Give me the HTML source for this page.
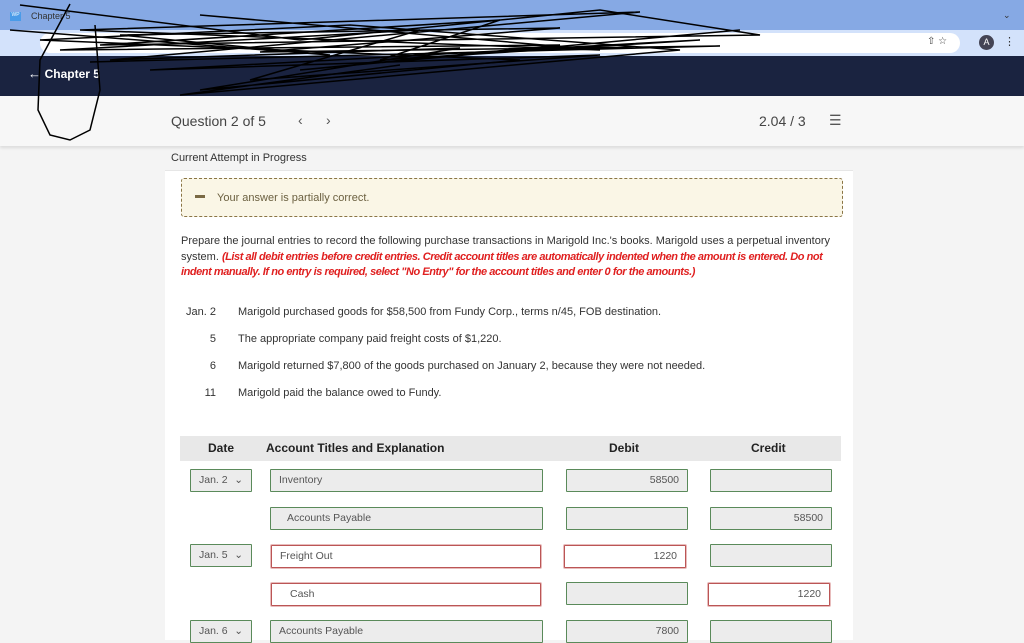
<!DOCTYPE html>
<html><head><meta charset="utf-8"><style>
*{box-sizing:border-box;margin:0;padding:0}
body{width:1024px;height:640px;overflow:hidden;background:#f4f4f4;font-family:"Liberation Sans",sans-serif;position:relative;color:#333}
.abs{position:absolute}
.inp{position:absolute;height:23px;border:1px solid #5a8a5a;background:#ececec;font-size:10.5px;color:#555;line-height:21px;padding:0 8px;border-radius:1px}
.red{border:1px solid #b55;background:#fff;box-shadow:0 0 0 1px #e8bcbc}
.r{text-align:right}
</style></head><body>
<div class="abs" style="left:0;top:0;width:1024px;height:30px;background:#86a9e4"></div>
<div class="abs" style="left:0;top:30px;width:1024px;height:26px;background:#d3e2fb"></div>
<div class="abs" style="left:40px;top:33px;width:920px;height:20px;background:#fff;border-radius:10px"></div>
<div class="abs" style="left:10px;top:12px;width:11px;height:9px;background:#4a9be8;font-size:5px;color:#fff;text-align:center">WP</div>
<div class="abs" style="left:31px;top:11px;font-size:9px;color:#333">Chapter 5</div>
<div class="abs" style="left:927px;top:36px;font-size:10px;color:#444">⇧ ☆</div>
<div class="abs" style="left:979px;top:35px;width:15px;height:15px;border-radius:50%;background:#445;color:#fff;font-size:9px;text-align:center;line-height:15px">A</div>
<div class="abs" style="left:1004px;top:35px;font-size:11px;color:#333">⋮</div>
<div class="abs" style="left:1003px;top:10px;font-size:9px;color:#333">⌄</div>
<div class="abs" style="left:0;top:56px;width:1024px;height:40px;background:#1a2340"></div>
<div class="abs" style="left:28px;top:66px;color:#fff;font-size:13px;font-weight:bold">← <span style="font-size:12px">Chapter 5</span></div>
<div class="abs" style="left:0;top:96px;width:1024px;height:50px;background:#f7f7f7;box-shadow:0 2px 3px rgba(0,0,0,.1)"></div>
<div class="abs" style="left:171px;top:113px;font-size:14px;color:#444">Question 2 of 5</div>
<div class="abs" style="left:298px;top:112px;font-size:14px;color:#555">‹&nbsp;&nbsp;&nbsp;&nbsp;&nbsp;&nbsp;›</div>
<div class="abs" style="left:759px;top:113px;font-size:14px;color:#444">2.04 / 3</div>
<div class="abs" style="left:829px;top:112px;font-size:14px;color:#555">☰</div>
<div class="abs" style="left:171px;top:152px;font-size:11px;color:#333">Current Attempt in Progress</div>
<div class="abs" style="left:165px;top:170px;width:688px;height:470px;background:#fff;border-top:1px solid #e6e6e6"></div>
<div class="abs" style="left:181px;top:178px;width:662px;height:39px;background:#faf6e6;border:1px dashed #8a7545;border-radius:3px"></div>
<div class="abs" style="left:195px;top:195px;width:10px;height:3px;background:#7a6a45"></div>
<div class="abs" style="left:217px;top:192px;font-size:11px;color:#6b6040">Your answer is partially correct.</div>
<div class="abs" style="left:181px;top:234px;width:665px;font-size:11px;line-height:15.5px;color:#333">Prepare the journal entries to record the following purchase transactions in Marigold Inc.'s books. Marigold uses a perpetual inventory system. <i style="color:#e02020;font-weight:bold;letter-spacing:-.45px">(List all debit entries before credit entries. Credit account titles are automatically indented when the amount is entered. Do not indent manually. If no entry is required, select "No Entry" for the account titles and enter 0 for the amounts.)</i></div>
<div class="abs r" style="left:180px;top:299px;width:36px;font-size:11px;line-height:27px;color:#333">Jan. 2<br>5<br>6<br>11</div>
<div class="abs" style="left:238px;top:299px;font-size:11px;line-height:27px;color:#333">Marigold purchased goods for $58,500 from Fundy Corp., terms n/45, FOB destination.<br>The appropriate company paid freight costs of $1,220.<br>Marigold returned $7,800 of the goods purchased on January 2, because they were not needed.<br>Marigold paid the balance owed to Fundy.</div>
<div class="abs" style="left:180px;top:436px;width:661px;height:25px;background:#e8e8e8;font-size:12px;font-weight:bold;color:#222;line-height:25px">
<span class="abs" style="left:28px">Date</span><span class="abs" style="left:86px">Account Titles and Explanation</span><span class="abs" style="left:429px">Debit</span><span class="abs" style="left:571px">Credit</span></div>
<div class="inp" style="left:190px;top:469px;width:62px">Jan. 2 <span style="float:right">⌄</span></div>
<div class="inp" style="left:270px;top:469px;width:273px">Inventory</div>
<div class="inp r" style="left:566px;top:469px;width:122px">58500</div>
<div class="inp" style="left:710px;top:469px;width:122px"></div>
<div class="inp" style="left:270px;top:507px;width:273px;padding-left:16px">Accounts Payable</div>
<div class="inp" style="left:566px;top:507px;width:122px"></div>
<div class="inp r" style="left:710px;top:507px;width:122px">58500</div>
<div class="inp" style="left:190px;top:544px;width:62px">Jan. 5 <span style="float:right">⌄</span></div>
<div class="inp red" style="left:271px;top:545px;width:270px">Freight Out</div>
<div class="inp red r" style="left:564px;top:545px;width:122px">1220</div>
<div class="inp" style="left:710px;top:544px;width:122px"></div>
<div class="inp red" style="left:271px;top:583px;width:270px;padding-left:18px">Cash</div>
<div class="inp" style="left:566px;top:582px;width:122px"></div>
<div class="inp red r" style="left:708px;top:583px;width:122px">1220</div>
<div class="inp" style="left:190px;top:620px;width:62px">Jan. 6 <span style="float:right">⌄</span></div>
<div class="inp" style="left:270px;top:620px;width:273px">Accounts Payable</div>
<div class="inp r" style="left:566px;top:620px;width:122px">7800</div>
<div class="inp" style="left:710px;top:620px;width:122px"></div>
<svg class="abs" style="left:0;top:0" width="1024" height="150" fill="none" stroke="#000" stroke-width="1.5">
<path d="M20 5 L300 40 L600 10 L760 35 L100 45 L500 20 L380 60 L700 40 L150 70 L600 55 L250 80 L420 30 L60 50 L560 45 L300 70 L740 30"/>
<path d="M200 15 L600 50 L80 30 L640 12 L110 60 L460 48 L200 90 L520 60 L40 40 L350 25 L680 50 L180 95 L400 65"/>
<path d="M70 4 L40 60 L38 110 L50 135 L70 140 L90 130 L100 90 L95 25"/>
<path d="M10 30 L330 55 L120 35 L560 28 L260 52 L720 46 L90 62"/>
</svg>
</body></html>
